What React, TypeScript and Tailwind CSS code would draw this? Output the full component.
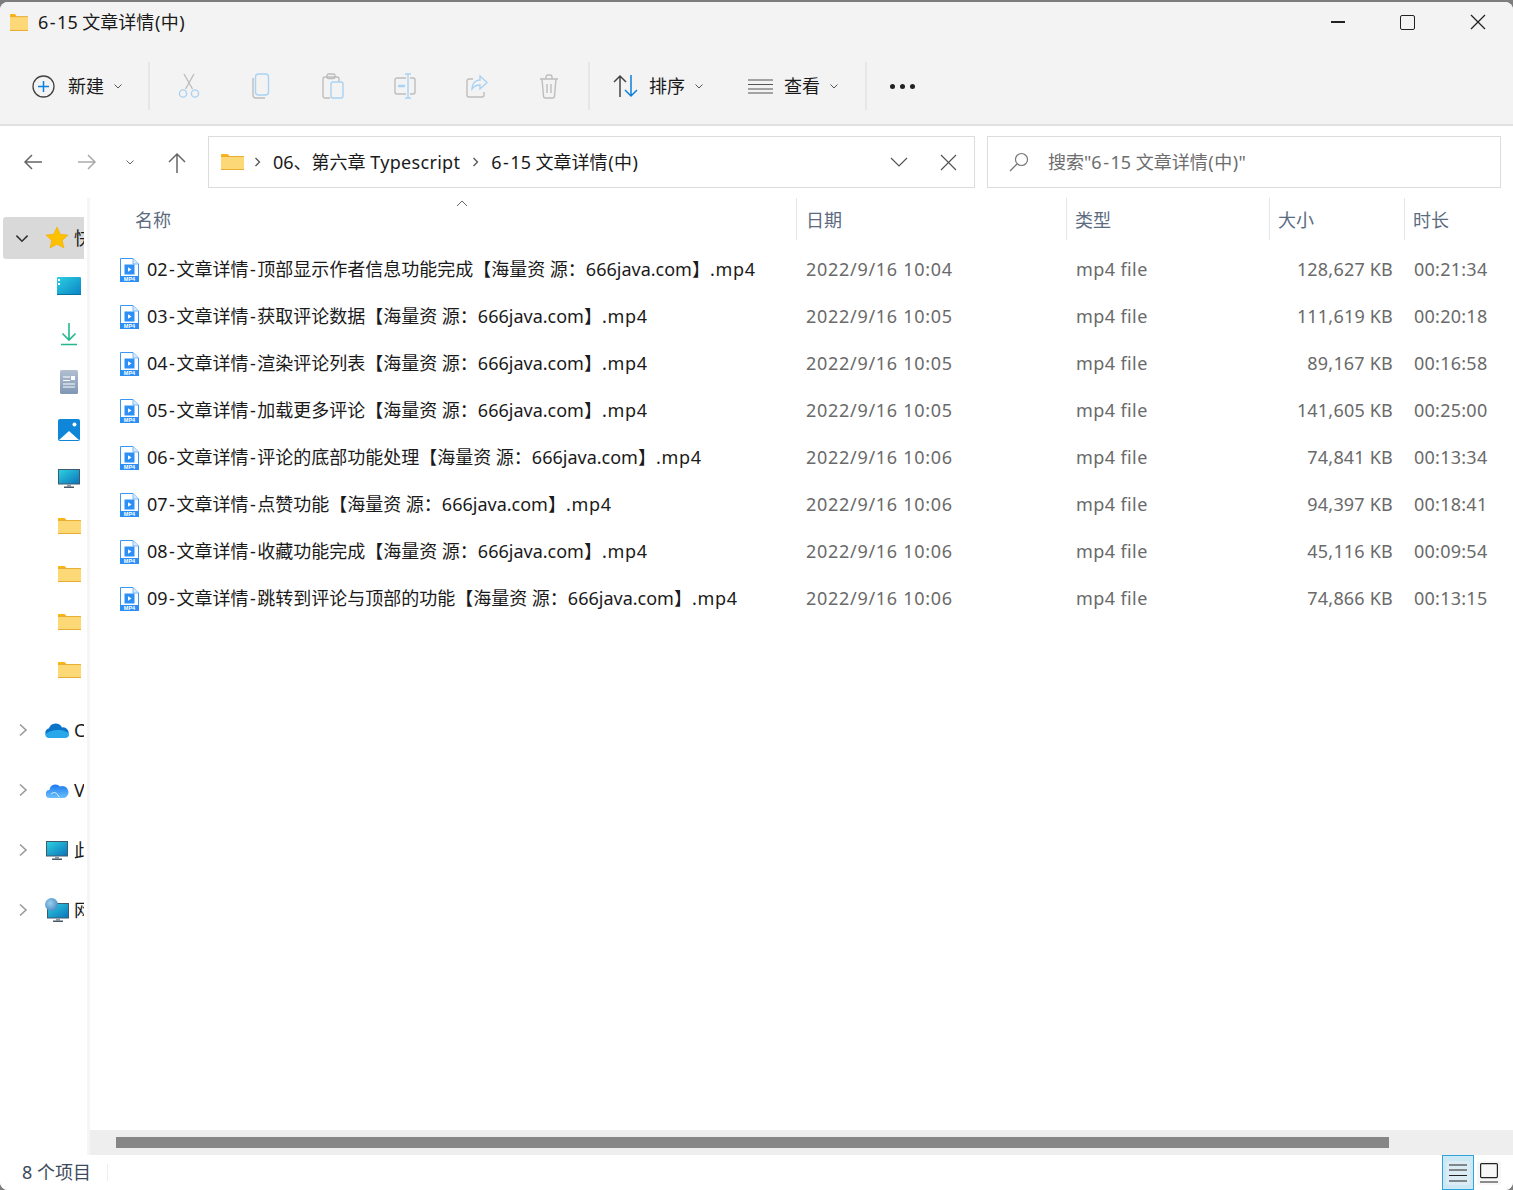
import React from "react";

const FONT = '"Noto Sans", "Noto Sans CJK SC", sans-serif';

const Tx = ({ s }: { s: string }) => (
  <>
    {s.split(/(-|\(|\)|\.mp4|Typescript)/).map((p, i) => {
      if (p === "-") return <span key={i} className="px-[1.5px]">-</span>;
      if (p === "(" || p === ")") return <span key={i} className="px-[0.5px]">{p}</span>;
      if (p === ".mp4") return <span key={i} className="tracking-[0.7px]">{p}</span>;
      if (p === "Typescript") return <span key={i} className="tracking-[0.3px]">{p}</span>;
      return p;
    })}
  </>
);

const Folder = ({ w = 23, h = 16 }: { w?: number; h?: number }) => (
  <svg width={w} height={h} viewBox="0 0 23 16" preserveAspectRatio="none" className="shrink-0">
    <path d="M0 1a1 1 0 0 1 1-1h5.5l2 2H8v2H0z" fill="#fbb316" />
    <rect x="0" y="2" width="23" height="14" fill="#e9ae33" />
    <rect x="0" y="3" width="23" height="12" fill="#fdd876" />
  </svg>
);

const Mp4 = () => (
  <svg width="19" height="24" viewBox="0 0 19 24" className="shrink-0">
    <path d="M0.5 0.500H13L18.500 6V23.500H0.500Z" fill="#fff" stroke="#3a97f5" />
    <path d="M13 0.500V6H18.500" fill="#d6e9fd" stroke="#7ab8f8" />
    <rect x="4.500" y="6.500" width="10" height="10" fill="#2b8ff5" />
    <path d="M8 9.200L11.500 11.500L8 13.800Z" fill="#fff" />
    <rect x="0" y="18" width="19" height="6" fill="#2b8ff5" />
    <text x="9.500" y="23.300" fontSize="5.500" fontWeight="700" textAnchor="middle" fill="#fff" fontFamily="Liberation Sans, sans-serif">MP4</text>
  </svg>
);

const Chev = ({ size = 10, color = "#555" }: { size?: number; color?: string }) => (
  <svg width={size} height={size} viewBox="0 0 10 10" fill="none" stroke={color} strokeWidth="1" className="shrink-0">
    <path d="M1.500 3.500L5 7L8.500 3.500" />
  </svg>
);

const Right = () => (
  <svg width="10" height="14" viewBox="0 0 10 14" fill="none" stroke="#9a9a9a" strokeWidth="1.600" className="shrink-0">
    <path d="M2 1.500L8 7L2 12.500" />
  </svg>
);

const G = "#bdbdbd";
const B = "#a9d2f3";

const Cut = () => (
  <svg width="24" height="26" viewBox="0 0 24 26" fill="none" strokeWidth="1.400">
    <path d="M7 1L15.500 16M17 1L8.500 16" stroke={G} />
    <circle cx="6" cy="20.500" r="3.600" stroke={B} />
    <circle cx="18" cy="20.500" r="3.600" stroke={B} />
  </svg>
);
const Copy = () => (
  <svg width="18" height="26" viewBox="0 0 18 26" fill="none" strokeWidth="1.400">
    <path d="M1 5v17a3 3 0 0 0 3 3h9" stroke={G} />
    <rect x="3.500" y="1" width="13" height="21" rx="3" stroke={B} />
  </svg>
);
const Paste = () => (
  <svg width="22" height="26" viewBox="0 0 22 26" fill="none" strokeWidth="1.400">
    <path d="M8 25H3a2 2 0 0 1-2-2V6a2 2 0 0 1 2-2h12a2 2 0 0 1 2 2v3" stroke={G} />
    <rect x="5" y="1" width="8" height="4.500" rx="1.500" stroke={G} />
    <rect x="9" y="9" width="12" height="16" rx="2" stroke={B} />
  </svg>
);
const Rename = () => (
  <svg width="22" height="26" viewBox="0 0 22 26" fill="none" strokeWidth="1.400">
    <path d="M12 5H3a2 2 0 0 0-2 2v12a2 2 0 0 0 2 2h9M16 5h3a2 2 0 0 1 2 2v12a2 2 0 0 1-2 2h-3" stroke={G} />
    <path d="M14 1v24M11 1h6M11 25h6" stroke={B} />
    <path d="M4 13h7" stroke={B} strokeWidth="2.400" />
  </svg>
);
const Share = () => (
  <svg width="22" height="24" viewBox="0 0 22 24" fill="none" strokeWidth="1.400">
    <path d="M7 5H3a2 2 0 0 0-2 2v14a2 2 0 0 0 2 2h13a2 2 0 0 0 2-2v-3" stroke={G} />
    <path d="M14 2l7 6.500-7 6.500v-4c-4 0-6 1-8 4 0-5 3-9 8-9z" stroke={B} />
  </svg>
);
const Trash = () => (
  <svg width="20" height="25" viewBox="0 0 20 25" fill="none" stroke={G} strokeWidth="1.400">
    <path d="M1 5h18M7 5V3a2 2 0 0 1 2-2h2a2 2 0 0 1 2 2v2M3 5l1.500 17a2 2 0 0 0 2 2h7a2 2 0 0 0 2-2L17 5M8 10v9M12 10v9" />
  </svg>
);

const Sep = () => <div className="h-[48px] w-[2px] bg-[#e6e6e6]" />;

const Star = () => (
  <svg width="24" height="24" viewBox="0 0 24 24" className="shrink-0">
    <path d="M12 1l3.300 7.200 7.700.9-5.700 5.300 1.600 7.600L12 18.200 5.100 22l1.600-7.600L1 9.100l7.700-.9z" fill="#fcc200" stroke="#f9a800" strokeWidth="0.600" />
  </svg>
);
const Desk = () => (
  <svg width="24" height="18" viewBox="0 0 24 18">
    <defs>
      <linearGradient id="dg" x1="0" y1="0" x2="1" y2="1">
        <stop offset="0" stopColor="#2bd0e2" />
        <stop offset="1" stopColor="#0b82c4" />
      </linearGradient>
    </defs>
    <rect width="24" height="18" rx="1" fill="url(#dg)" />
    <rect x="1" y="2" width="2" height="2" fill="#fff" />
    <rect x="1" y="6" width="2" height="2" fill="#fff" />
    <rect x="0" y="17" width="24" height="1" fill="#0a6f9f" />
  </svg>
);
const Down = () => (
  <svg width="18" height="24" viewBox="0 0 18 24" fill="none" stroke="#22b88d" strokeWidth="1.600">
    <path d="M9 1v17M2.500 11.500L9 18l6.500-6.500M1 22.500h16" />
  </svg>
);
const Docs = () => (
  <svg width="18" height="24" viewBox="0 0 18 24">
    <defs>
      <linearGradient id="do" x1="0" y1="0" x2="0" y2="1">
        <stop offset="0" stopColor="#b2bfd0" />
        <stop offset="1" stopColor="#7f97b4" />
      </linearGradient>
    </defs>
    <rect width="18" height="24" rx="1.500" fill="url(#do)" />
    <path d="M3 7h7M3 10.500h7M3 14h12M3 17h12" stroke="#fff" strokeWidth="1" />
    <rect x="11" y="6" width="4" height="4" fill="#fff" />
  </svg>
);
const Pics = () => (
  <svg width="22" height="22" viewBox="0 0 22 22">
    <rect width="22" height="22" rx="2" fill="#0f86d8" />
    <circle cx="16.500" cy="5.500" r="2" fill="#fff" />
    <path d="M1 21l10-9 10 9z" fill="#fff" />
  </svg>
);
const Monitor = ({ w = 22, id }: { w?: number; id: string }) => (
  <svg width={w} height={(w * 19) / 22} viewBox="0 0 22 19" className="shrink-0">
    <defs>
      <linearGradient id={id} x1="0" y1="0" x2="1" y2="1">
        <stop offset="0" stopColor="#2dd0e0" />
        <stop offset="1" stopColor="#0b74bb" />
      </linearGradient>
    </defs>
    <rect width="22" height="15.500" fill="#3f5a6b" />
    <rect x="1" y="1" width="20" height="13.500" fill={`url(#${id})`} />
    <rect x="9" y="15.500" width="4" height="2" fill="#8a9aa6" />
    <rect x="6" y="17.500" width="10" height="1.500" fill="#4a5864" />
  </svg>
);
const OneDrive = () => (
  <svg width="24" height="16" viewBox="0 0 24 16" className="shrink-0">
    <path d="M5 16a5 5 0 0 1-1-9.800A7 7 0 0 1 17 5.500 5 5 0 0 1 19.500 16z" fill="#0c74c8" />
    <path d="M5 16c-3 0-5-1.500-4.500-4C3 10 8 8 13 8c5 0 11 2 11 5 0 2-2 3-4.500 3z" fill="#28a8ea" />
  </svg>
);
const Cloud = () => (
  <svg width="23" height="16" viewBox="0 0 23 16" className="shrink-0">
    <defs>
      <linearGradient id="cl" x1="0" y1="0" x2="0" y2="1">
        <stop offset="0" stopColor="#1a78f0" />
        <stop offset="1" stopColor="#6cc1fa" />
      </linearGradient>
    </defs>
    <path d="M4 16a4 4 0 0 1-.5-8A6 6 0 0 1 14 4.500 5.500 5.500 0 0 1 18.500 16z" fill="url(#cl)" />
    <path d="M5 12c4-3 6-1 8 3" stroke="#fff" strokeWidth="0.800" fill="none" />
  </svg>
);
const Net = () => (
  <div className="relative h-[24px] w-[24px] shrink-0">
    <div className="absolute bottom-0 left-[2px]">
      <Monitor w={22} id="m3" />
    </div>
    <div className="absolute left-0 top-0 h-[13px] w-[13px] rounded-full bg-[radial-gradient(circle_at_40%_40%,#9ed0ec,#2b78b8)]" />
  </div>
);

const sidePin: [string, React.ReactNode][] = [
  ["a", <Desk />],
  ["b", <Down />],
  ["c", <Docs />],
  ["d", <Pics />],
  ["e", <Monitor w={22} id="m1" />],
  ["f", <Folder />],
  ["g", <Folder />],
  ["h", <Folder />],
  ["i", <Folder />],
];

const sideRoots: [React.ReactNode, string][] = [
  [<OneDrive />, "C"],
  [<Cloud />, "V"],
  [<Monitor w={22} id="m2" />, "此"],
  [<Net />, "网"],
];

const files = [
  ["02-文章详情-顶部显示作者信息功能完成【海量资 源：666java.com】.mp4", "10:04", "128,627 KB", "00:21:34"],
  ["03-文章详情-获取评论数据【海量资 源：666java.com】.mp4", "10:05", "111,619 KB", "00:20:18"],
  ["04-文章详情-渲染评论列表【海量资 源：666java.com】.mp4", "10:05", "89,167 KB", "00:16:58"],
  ["05-文章详情-加载更多评论【海量资 源：666java.com】.mp4", "10:05", "141,605 KB", "00:25:00"],
  ["06-文章详情-评论的底部功能处理【海量资 源：666java.com】.mp4", "10:06", "74,841 KB", "00:13:34"],
  ["07-文章详情-点赞功能【海量资 源：666java.com】.mp4", "10:06", "94,397 KB", "00:18:41"],
  ["08-文章详情-收藏功能完成【海量资 源：666java.com】.mp4", "10:06", "45,116 KB", "00:09:54"],
  ["09-文章详情-跳转到评论与顶部的功能【海量资 源：666java.com】.mp4", "10:06", "74,866 KB", "00:13:15"],
];

const COLS = "grid grid-cols-[707px_270px_203px_135px_108px]";

const Head = ({ label, pad, last }: { label: string; pad: string; last?: boolean }) => (
  <div className={`flex h-[42px] items-center pt-[2px] text-[#5b6b80] ${pad} ${last ? "" : "border-r border-[#e5e5e5]"}`}>{label}</div>
);

export default function App() {
  return (
    <div
      className="flex h-[1190px] w-[1513px] flex-col overflow-hidden bg-[#7d7d7d] text-[18px] text-[#1a1a1a]"
      style={{ fontFamily: FONT }}
    >
      <div className="mt-[2px] flex min-h-0 flex-1 flex-col overflow-hidden rounded-lg bg-white">
        {/* title bar */}
        <div className="flex h-[40px] items-center bg-[#f3f3f3] pl-[10px]">
          <Folder w={18} h={17} />
          <span className="ml-[10px] whitespace-nowrap">
            <Tx s="6-15 文章详情(中)" />
          </span>
          <div className="ml-auto flex">
            <div className="flex h-[40px] w-[70px] items-center justify-center">
              <div className="h-[1.500px] w-[14px] bg-[#222]" />
            </div>
            <div className="flex h-[40px] w-[70px] items-center justify-center pr-[2px]">
              <div className="h-[15px] w-[15px] rounded-[2px] border-[1.500px] border-[#222]" />
            </div>
            <div className="flex h-[40px] w-[70px] items-center justify-center">
              <svg width="16" height="16" viewBox="0 0 16 16" stroke="#222" strokeWidth="1.300">
                <path d="M1 1l14 14M15 1L1 15" />
              </svg>
            </div>
          </div>
        </div>

        {/* toolbar */}
        <div className="flex h-[84px] items-center border-b-2 border-[#e0e0e0] bg-[#f3f3f3] pt-[6px]">
          <div className="flex w-[138px] items-center pl-[32px]">
            <svg width="23" height="23" viewBox="0 0 23 23" fill="none">
              <circle cx="11.500" cy="11.500" r="10.500" stroke="#444" strokeWidth="1.300" />
              <path d="M11.500 6v11M6 11.500h11" stroke="#0a7fdc" strokeWidth="1.500" />
            </svg>
            <span className="ml-[13px]">新建</span>
            <span className="ml-[9px]">
              <Chev />
            </span>
          </div>
          <div className="ml-[10px] mr-[3px]">
            <Sep />
          </div>
          {[<Cut />, <Copy />, <Paste />, <Rename />, <Share />, <Trash />].map((ic, i) => (
            <div key={i} className="flex w-[72px] items-center justify-center">
              {ic}
            </div>
          ))}
          <div className="ml-[3px]">
            <Sep />
          </div>
          <div className="ml-[23px] flex w-[120px] items-center">
            <svg width="26" height="24" viewBox="0 0 26 24" fill="none" strokeWidth="1.500">
              <path d="M7 23V2M1 8l6-6 6 6" stroke="#444" />
              <path d="M18 1v21M12 16l6 6 6-6" stroke="#0a7fdc" />
            </svg>
            <span className="ml-[10px]">排序</span>
            <span className="ml-[9px]">
              <Chev />
            </span>
          </div>
          <div className="ml-[15px] flex w-[108px] items-center">
            <svg width="25" height="15" viewBox="0 0 25 15" stroke="#555" strokeWidth="1.200">
              <path d="M0 1h25M0 5.500h25M0 10h25M0 14h25" />
            </svg>
            <span className="ml-[11px]">查看</span>
            <span className="ml-[9px]">
              <Chev />
            </span>
          </div>
          <div className="ml-[9px]">
            <Sep />
          </div>
          <div className="ml-[23px] flex gap-[5px]">
            <div className="h-[5px] w-[5px] rounded-full bg-[#222]" />
            <div className="h-[5px] w-[5px] rounded-full bg-[#222]" />
            <div className="h-[5px] w-[5px] rounded-full bg-[#222]" />
          </div>
        </div>

        {/* address row */}
        <div className="flex h-[72px] items-center bg-white">
          <div className="flex w-[208px] items-center">
            <svg className="ml-[23px]" width="20" height="18" viewBox="0 0 20 18" fill="none" stroke="#666" strokeWidth="1.500">
              <path d="M19 9H2M9 2L2 9l7 7" />
            </svg>
            <svg className="ml-[34px]" width="20" height="18" viewBox="0 0 20 18" fill="none" stroke="#aaa" strokeWidth="1.500">
              <path d="M1 9h17M11 2l7 7-7 7" />
            </svg>
            <span className="ml-[28px]">
              <Chev size={10} color="#666" />
            </span>
            <svg className="ml-[32px]" width="20" height="21" viewBox="0 0 20 21" fill="none" stroke="#666" strokeWidth="1.500">
              <path d="M10 21V2M2 10l8-8 8 8" />
            </svg>
          </div>
          <div className="flex h-[52px] w-[767px] items-center border border-[#dcdcdc] pl-[12px]">
            <Folder />
            <svg className="ml-[10px]" width="7" height="10" viewBox="0 0 7 10" fill="none" stroke="#555" strokeWidth="1.300">
              <path d="M1.500 1l4 4-4 4" />
            </svg>
            <span className="ml-[12px] whitespace-nowrap">
              <Tx s="06、第六章 Typescript" />
            </span>
            <svg className="ml-[12px]" width="7" height="10" viewBox="0 0 7 10" fill="none" stroke="#555" strokeWidth="1.300">
              <path d="M1.500 1l4 4-4 4" />
            </svg>
            <span className="ml-[12px] whitespace-nowrap">
              <Tx s="6-15 文章详情(中)" />
            </span>
            <div className="ml-auto flex items-center">
              <svg width="18" height="10" viewBox="0 0 18 10" fill="none" stroke="#555" strokeWidth="1.200">
                <path d="M1 1l8 8 8-8" />
              </svg>
              <svg className="ml-[32px] mr-[17px]" width="17" height="17" viewBox="0 0 17 17" stroke="#555" strokeWidth="1.200">
                <path d="M1 1l15 15M16 1L1 16" />
              </svg>
            </div>
          </div>
          <div className="ml-[12px] flex h-[52px] w-[514px] items-center border border-[#dcdcdc] pl-[21px] text-[#6d6d6d]">
            <svg width="20" height="20" viewBox="0 0 20 20" fill="none" stroke="#777" strokeWidth="1.200">
              <circle cx="12.500" cy="7.500" r="6" />
              <path d="M8 12l-7 7" />
            </svg>
            <span className="ml-[19px] whitespace-nowrap">
              <Tx s={'搜索"6-15 文章详情(中)"'} />
            </span>
          </div>
        </div>

        {/* body */}
        <div className="flex min-h-0 flex-1 bg-white">
          {/* sidebar */}
          <div className="w-[87px] shrink-0 overflow-hidden pt-[19px]">
            <div className="w-[84px] overflow-hidden">
              <div className="ml-[3px] flex h-[42px] items-center overflow-hidden rounded-l-[3px] bg-[#d9d9d9]">
                <span className="ml-[11px]">
                  <Chev size={16} color="#333" />
                </span>
                <span className="ml-[15px]">
                  <Star />
                </span>
                <span className="ml-[5px] whitespace-nowrap">快速访问</span>
              </div>
              <div className="pt-[3px]">
                {sidePin.map(([k, ic]) => (
                  <div key={k} className="flex h-[48px] items-center pl-[57px]">
                    <div className="flex w-[24px] justify-center">{ic}</div>
                  </div>
                ))}
              </div>
              <div className="pt-[6px]">
                {sideRoots.map(([ic, t], i) => (
                  <div key={i} className="flex h-[60px] items-center overflow-hidden pl-[18px]">
                    <Right />
                    <div className="ml-[17px] flex w-[24px] shrink-0 justify-center">{ic}</div>
                    <span className="ml-[5px] whitespace-nowrap">{t}</span>
                  </div>
                ))}
              </div>
            </div>
          </div>

          <div className="w-[3px] shrink-0 bg-[#f5f5f5]" />

          {/* file list */}
          <div className="flex min-w-0 flex-1 flex-col overflow-hidden">
            <div className={COLS}>
              <div className="relative">
                <Head label="名称" pad="pl-[45px]" />
                <svg className="absolute left-[366px] top-[2px]" width="12" height="7" viewBox="0 0 12 7" fill="none" stroke="#666" strokeWidth="1">
                  <path d="M1 6l5-5 5 5" />
                </svg>
              </div>
              <Head label="日期" pad="pl-[9px]" />
              <Head label="类型" pad="pl-[8px]" />
              <Head label="大小" pad="pl-[8px]" />
              <Head label="时长" pad="pl-[8px]" last />
            </div>
            <div className="min-h-0 flex-1 pt-[6px]">
              {files.map(([name, time, size, dur]) => (
                <div key={name} className={`${COLS} h-[47px] items-center`}>
                  <div className="flex items-center pl-[30px]">
                    <Mp4 />
                    <span className="ml-[8px] whitespace-nowrap">
                      <Tx s={name} />
                    </span>
                  </div>
                  <div className="whitespace-nowrap pl-[9px] tracking-[0.7px] text-[#6a6a6a]">2022/9/16 {time}</div>
                  <div className="pl-[9px] tracking-[0.4px] text-[#6a6a6a]">mp4 file</div>
                  <div className="pr-[12px] text-right tracking-[0.2px] text-[#6a6a6a]">{size}</div>
                  <div className="pl-[9px] tracking-[0.25px] text-[#6a6a6a]">{dur}</div>
                </div>
              ))}
            </div>
            <div className="flex h-[25px] shrink-0 items-center bg-[#eeeeee] pl-[26px]">
              <div className="h-[11px] w-[1273px] bg-[#868686]" />
            </div>
          </div>
        </div>

        {/* status */}
        <div className="flex h-[35px] shrink-0 items-center bg-white pl-[22px] text-[#3c4a5c]">
          <span className="whitespace-nowrap">8 个项目</span>
          <div className="ml-[16px] h-[17px] w-px bg-[#eeeeee]" />
          <div className="ml-auto flex h-full items-center">
            <div className="flex h-[35px] w-[32px] items-center justify-center border border-[#2fa3dc] bg-[#cce8f5]">
              <div className="flex h-[24px] w-[24px] items-center justify-center rounded-[3px] bg-[#dcecf5]">
                <svg width="18" height="18" viewBox="0 0 18 18" stroke="#222" strokeWidth="1.200">
                  <path d="M0 1h18M0 6h18M0 11.500h18M0 17h18" />
                </svg>
              </div>
            </div>
            <div className="ml-[3px] mr-[12px] flex h-[24px] w-[24px] items-center justify-center rounded-[3px] bg-[#f7f7f7]">
              <svg width="18" height="20" viewBox="0 0 18 20" fill="none" stroke="#222" strokeWidth="1.200">
                <rect x="0.600" y="0.600" width="16.800" height="14" rx="1" />
                <path d="M0 19h18" />
              </svg>
            </div>
          </div>
        </div>
      </div>
    </div>
  );
}
